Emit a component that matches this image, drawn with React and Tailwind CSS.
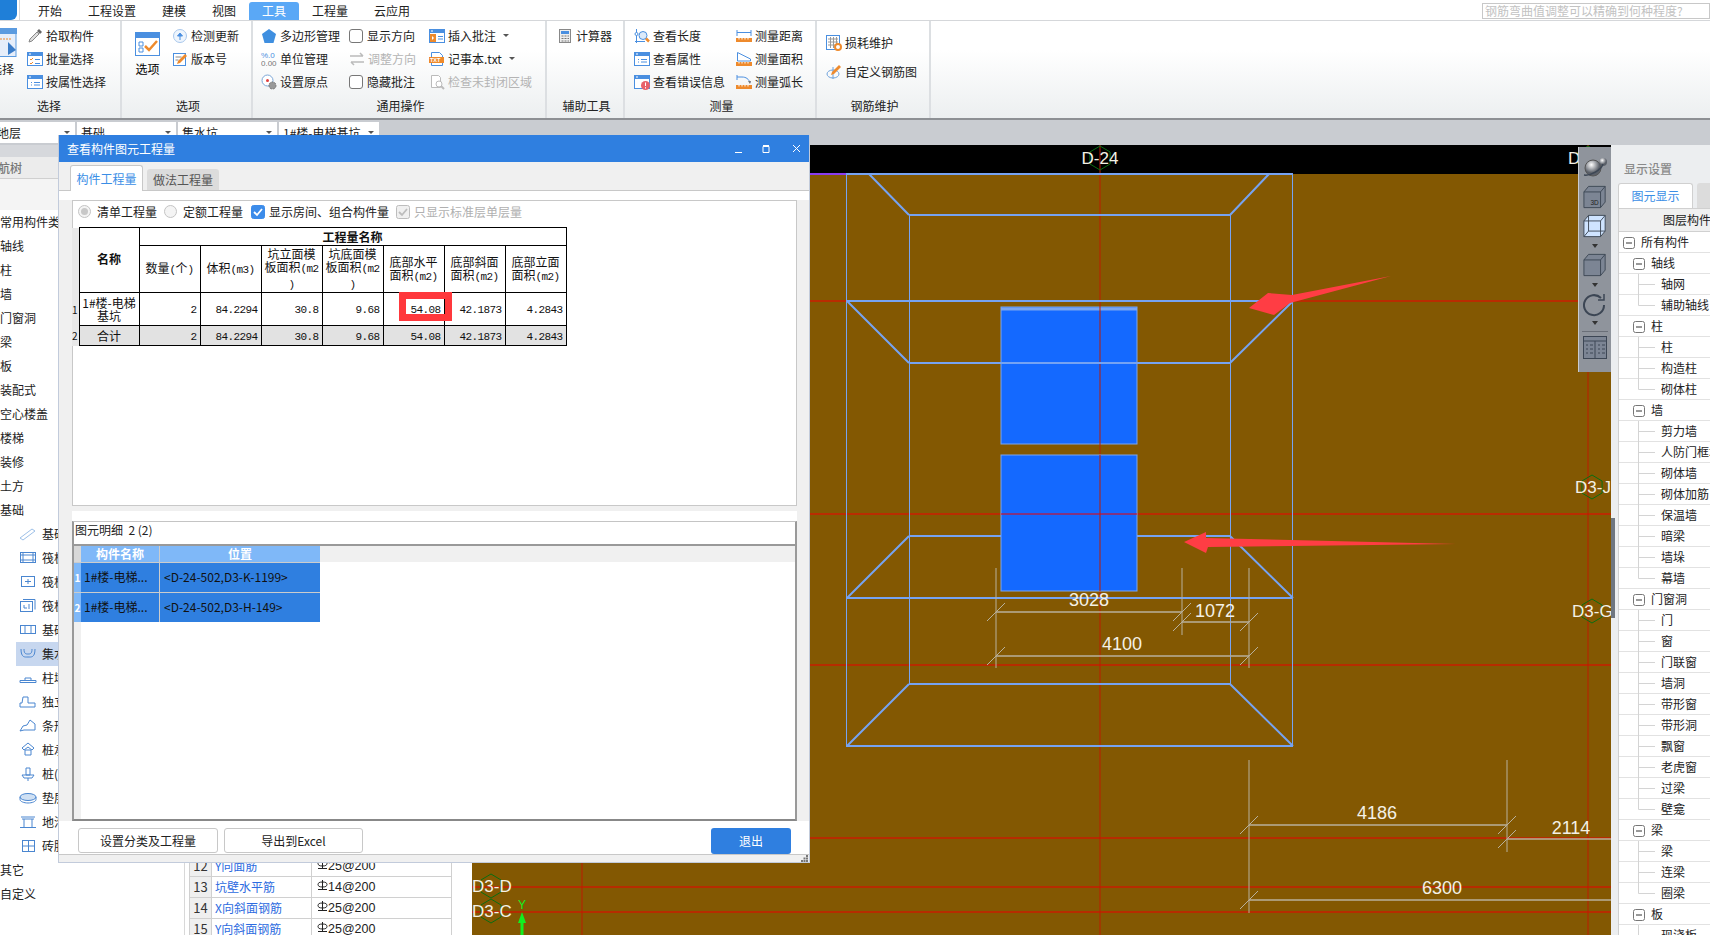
import React from 'react';

const B = '#4a8fe0';
const O = '#ee8a2c';

// small ribbon icons, all drawn in a 16x16 box
const Ico = ({ children, w = 16, h = 16 }) => (
    <svg width={w} height={h} viewBox={`0 0 ${w} ${h}`} className="shrink-0" fill="none">{children}</svg>
);
const Win = () => (<><rect x="0.5" y="1.5" width="15" height="13" fill="#fff" stroke={B} /><rect x="0" y="1" width="16" height="4" fill={B} /><rect x="2" y="2.5" width="2" height="1" fill="#fff" /></>);

const icons = {
    pick: <Ico><path d="M2 14l1-3 7-7 2 2-7 7z" fill="#ddd" stroke="#888" /><path d="M10 3l2-2 3 3-2 2z" fill="#666" /></Ico>,
    batch: <Ico><Win /><path d="M3 8l1 1 2-2M3 12l1 1 2-2" stroke={O} /><path d="M8 8.5h5M8 12.5h5" stroke={B} /></Ico>,
    prop: <Ico><Win /><path d="M7 8.5h6M7 11h6M4 8.5h1M4 11h1" stroke={B} /></Ico>,
    update: <Ico><circle cx="8" cy="8" r="6.5" fill="#eef5fd" stroke="#a9c8ec" /><path d="M8 12V6M5.5 8L8 5l2.500 3z" fill={B} stroke={B} /></Ico>,
    version: <Ico><rect x="1.500" y="2.500" width="12" height="12" fill="#fff" stroke={B} /><path d="M3.500 6h6M3.500 9h3" stroke="#888" /><path d="M5 13l1-3 7-7 2 2-7 7z" fill={O} /></Ico>,
    polygon: <Ico><path d="M8 1l7 5-2.500 9h-9L1 6z" fill="#3f8fe0" /></Ico>,
    unit: <Ico><text x="0" y="7" fontSize="8" fill={B} fontFamily="Liberation Sans">%.0</text><text x="0" y="15" fontSize="8" fill="#777" fontFamily="Liberation Sans">0.00</text></Ico>,
    origin: <Ico><circle cx="6.500" cy="6.500" r="5.500" fill="#fff" stroke="#7aa6d8" /><circle cx="6.500" cy="6.500" r="1.500" fill="#e04040" /><circle cx="11.500" cy="11.500" r="3.500" fill="#999" stroke="#777" strokeDasharray="2 1" /></Ico>,
    adjust: <Ico><path d="M1 5h13M14 5l-3-3M15 11H2M2 11l3 3" stroke="#bbb" strokeWidth="1.500" /></Ico>,
    note: <Ico><Win /><path d="M1 6h6v8H1z" fill={O} /><path d="M3 8l2 2-2 2z" fill="#fff" /><path d="M9 8.500h5M9 11h5" stroke={B} /></Ico>,
    txt: <Ico><path d="M2.500 1.500h8l3 3v10h-11z" fill="#fff" stroke={B} /><rect x="0" y="6" width="15" height="6" fill={O} /><text x="1" y="11" fontSize="5.500" fontWeight="700" fill="#fff" fontFamily="Liberation Sans">TXT</text></Ico>,
    unclosed: <Ico><path d="M2.500 1.500h7l2 2v10h-9z" fill="#fff" stroke="#bbb" /><circle cx="10" cy="10" r="3" fill="#fff" stroke="#bbb" /><path d="M12 12l3 3" stroke="#bbb" strokeWidth="2" /></Ico>,
    calc: <Ico><rect x="2.500" y="1.500" width="11" height="13" fill="#eee" stroke="#888" /><rect x="4" y="3" width="8" height="3" fill={B} /><path d="M4.500 8h2M7.500 8h2M10.500 8h1.500M4.500 10.500h2M7.500 10.500h2M10.500 10.500h1.500M4.500 13h2M7.500 13h2M10.500 13h1.500" stroke="#777" /></Ico>,
    length: <Ico><path d="M2.500 1v14M1 13.500h10" stroke={B} /><circle cx="2.500" cy="6" r="1.500" fill="#fff" stroke={B} /><circle cx="9" cy="7.500" r="4" fill="#dceafa" stroke={B} /><path d="M12 10.500l3 3" stroke={O} strokeWidth="2.500" /></Ico>,
    errorinfo: <Ico><Win /><circle cx="11.500" cy="11.500" r="4.500" fill="#e8606a" /><path d="M11.500 8.500v3.500M11.500 13.200v1.300" stroke="#fff" /></Ico>,
    dist: <Ico><path d="M1 2v6M15 2v6M1 4.500h14" stroke={B} /><rect x="0" y="10" width="16" height="4" fill={O} /><path d="M3 10v1.500M6 10v1.500M9 10v1.500M12 10v1.500" stroke="#fff" /></Ico>,
    area: <Ico><path d="M1.500 1.500l13 6.500v2h-13z" fill="#fff" stroke={B} /><rect x="0" y="11" width="16" height="4" fill={O} /><path d="M3 11v1.500M6 11v1.500M9 11v1.500M12 11v1.500" stroke="#fff" /></Ico>,
    arc: <Ico><path d="M1 1v5M1 3h5c4 0 7 2 8 6" stroke={B} /><path d="M12 7l2 3 1-3" fill="#777" /><rect x="0" y="11" width="16" height="4" fill={O} /><path d="M3 11v1.500M6 11v1.500M9 11v1.500M12 11v1.500" stroke="#fff" /></Ico>,
    loss: <Ico><rect x="0.500" y="0.500" width="13" height="14" fill="#fff" stroke={B} /><path d="M2 4h10M2 7h10M2 10h10M4.500 2v11M7.500 2v11M10.500 2v11" stroke="#999" /><circle cx="12" cy="12" r="3" fill="#fff" stroke={O} strokeWidth="2" /></Ico>,
    custom: <Ico><ellipse cx="7" cy="10" rx="6" ry="4" stroke="#6fa3dc" /><path d="M7 3v12" stroke="#6fa3dc" /><path d="M5 11l1-3 7-7 2 2-7 7z" fill={O} /></Ico>,
};

const Item = ({ icon, label, gray, caret }) => (
    <div className={`flex h-[23px] items-center gap-[3px] whitespace-nowrap ${gray ? 'text-[#b4b4b4]' : 'text-[#1d1d1d]'}`}>
        {icons[icon]}
        <span>{label}</span>
        {caret && <span className="ml-[4px] h-0 w-0 border-x-[3px] border-t-[3px] border-x-transparent border-t-[#555]" />}
    </div>
);

const Check = ({ label }) => (
    <div className="flex h-[23px] items-center gap-[4px] whitespace-nowrap text-[#1d1d1d]">
        <span className="h-[14px] w-[14px] rounded-[3px] border border-[#777] bg-white" />
        <span>{label}</span>
    </div>
);

const Group = ({ label, width, className = '', labelClass = 'pl-[3px]', children }) => (
    <div style={{ width }} className="flex h-full shrink-0 flex-col border-r-2 border-[#dcdfe2]">
        <div className={`flex h-[74px] ${className}`}>{children}</div>
        <div className={`flex h-[25px] items-center justify-center text-[#222] ${labelClass}`}>{label}</div>
    </div>
);

const Ribbon = () => (
    <div className="flex h-[99px] border-b-[2px] border-[#8d9094] bg-gradient-to-b from-white from-30% to-[#eceff0] text-[12px]">
        <Group label="选择" width={122} labelClass="pr-[22px]" className="gap-[8px] pt-[3px]">
            <div className="flex w-[19px] flex-col items-start pt-[4px]">
                <svg width="17" height="29" viewBox="0 0 17 29" fill="none"><rect x="-8" y="0.500" width="24" height="28" fill="#e6eefa" stroke="#5b9be0" /><rect x="-8" y="0" width="25" height="6" fill="#5b9be0" /><path d="M0 11h12" stroke={O} strokeDasharray="2 1" /><path d="M8 14l8 8-8 5z" fill="#3a7cc8" /></svg>
                <span className="mt-[3px] -ml-[10px] text-[#222]">选择</span>
            </div>
            <div><Item icon="pick" label="拾取构件" /><Item icon="batch" label="批量选择" /><Item icon="prop" label="按属性选择" /></div>
        </Group>
        <Group label="选项" width={131} className="gap-[12px] pl-[13px] pt-[3px]">
            <div className="flex w-[25px] flex-col items-center pt-[8px]">
                <svg width="25" height="24" viewBox="0 0 25 24" fill="none"><rect x="0.500" y="0.500" width="24" height="23" fill="#fff" stroke={B} /><rect x="0" y="0" width="25" height="6" fill={B} /><path d="M4 10h4v4H4zM4 16h4v4H4z" stroke={B} /><path d="M10 14l4 4 8-9" stroke={O} strokeWidth="2.500" /></svg>
                <span className="mt-[4px] whitespace-nowrap">选项</span>
            </div>
            <div><Item icon="update" label="检测更新" /><Item icon="version" label="版本号" /></div>
        </Group>
        <Group label="通用操作" width={294} className="pl-[8px] pt-[3px]">
            <div className="w-[88px]"><Item icon="polygon" label="多边形管理" /><Item icon="unit" label="单位管理" /><Item icon="origin" label="设置原点" /></div>
            <div className="w-[80px]"><Check label="显示方向" /><Item icon="adjust" label="调整方向" gray /><Check label="隐藏批注" /></div>
            <div><Item icon="note" label="插入批注" caret /><Item icon="txt" label="记事本.txt" caret /><Item icon="unclosed" label="检查未封闭区域" gray /></div>
        </Group>
        <Group label="辅助工具" width={78} className="pl-[10px] pt-[3px]">
            <Item icon="calc" label="计算器" />
        </Group>
        <Group label="测量" width={192} className="pl-[9px] pt-[3px]">
            <div className="w-[102px]"><Item icon="length" label="查看长度" /><Item icon="prop" label="查看属性" /><Item icon="errorinfo" label="查看错误信息" /></div>
            <div><Item icon="dist" label="测量距离" /><Item icon="area" label="测量面积" /><Item icon="arc" label="测量弧长" /></div>
        </Group>
        <Group label="钢筋维护" width={114} className="flex-col gap-[6px] pl-[9px] pt-[10px]">
            <Item icon="loss" label="损耗维护" /><Item icon="custom" label="自定义钢筋图" />
        </Group>
    </div>
);

const tabs = [
    ['开始', 'w-[58px]'], ['工程设置', 'w-[66px]'], ['建模', 'w-[58px]'], ['视图', 'w-[42px]'],
    ['工具', 'w-[50px] ml-[4px] rounded-t-[3px] bg-[#5aa8f6] text-white'], ['工程量', 'w-[62px]'], ['云应用', 'w-[62px]'],
];

const TopTabs = () => (
    <div className="flex h-[21px] border-b border-[#d5d7da] bg-white text-[12px] text-[#222]">
        <div className="h-[20px] w-[17px] rounded-br-[6px] bg-[#1f7fd8]" />
        <div className="ml-[2px] mr-[1px] w-px bg-[#d5d7da]" />
        {tabs.map(([t, c]) => (
            <div key={t} className={`mt-[2px] flex h-[18px] items-center justify-center ${c}`}>{t}</div>
        ))}
        <div className="ml-auto mt-[3px] flex h-[16px] w-[228px] items-center border border-[#c8c8c8] pl-[2px] text-[#c2c2c2]">钢筋弯曲值调整可以精确到何种程度?</div>
    </div>
);

const Drop = ({ w, text, cls = '' }) => (
    <div style={{ width: w }} className="flex h-[21px] items-center justify-between overflow-hidden bg-white pl-[4px] pr-[5px]">
        <span className={cls}>{text}</span>
        <span className="h-0 w-0 border-x-[3px] border-t-[3px] border-x-transparent border-t-[#555]" />
    </div>
);

const DropRow = () => (
    <div className="flex h-[25px] gap-[2px] bg-[#c9ccd1] pt-[2px] text-[12px] text-[#222]">
        <Drop w={75} text="地层" cls="-ml-[7px]" />
        <Drop w={99} text="基础" />
        <Drop w={99} text="集水坑" />
        <Drop w={100} text="1#楼-电梯基坑" />
    </div>
);

const S = '#4a86d0';
const childIcons = [
    <path key="0" d="M1 12L13 3l3 2L4 14z" stroke="#9dc0e8" />,
    <g key="1" stroke={S}><rect x="1.500" y="2.500" width="15" height="10" /><path d="M4 2.500v10M14 2.500v10M1.500 5h15M1.500 10h15" /></g>,
    <g key="2" stroke={S}><rect x="2.500" y="2.500" width="13" height="10" /><path d="M6 7.500h6M9 5v5" /></g>,
    <g key="3" stroke={S}><rect x="1.500" y="3.500" width="12" height="10" /><path d="M4 1.500h12v10M5 7v3h3M10 6v5" /></g>,
    <g key="4" stroke={S}><rect x="1.500" y="3.500" width="15" height="8" /><path d="M6 3.500v8M12 3.500v8" /></g>,
    <g key="5" stroke={S}><path d="M2 3c0 9 4 8 7 8s7 1 7-8M5 3c0 5 2 5 4 5s4 0 4-5" /></g>,
    <g key="6" stroke={S}><path d="M1 12.500h16v-2H1zM6 10.500V8h6v2.500" /></g>,
    <g key="7" stroke={S}><path d="M1 13h15V9H9V3H4L3 9H1z" /></g>,
    <g key="8" stroke={S}><path d="M1 13l3-5 4-1 3-5 5 4v6H5z" /></g>,
    <g key="9" stroke={S}><path d="M9 1L3 6l2 2 4-3 4 3 2-2zM6 8h6v5H6z" /></g>,
    <g key="10" stroke={S}><path d="M7 2h4v7H7zM3 9h12l-2 3H5zM9 12v3" /></g>,
    <g key="11" stroke={S}><ellipse cx="9" cy="7" rx="8" ry="3.500" fill="#cfe0f3" /><path d="M1 7v2.500C1 11.500 5 13 9 13s8-1.500 8-3.500V7" /></g>,
    <g key="12" stroke={S}><path d="M2 3h14M3 5h12M5 5v8M13 5v8M1 13.500h16" /></g>,
    <g key="13" stroke={S}><rect x="3.500" y="2.500" width="12" height="11" /><path d="M9.500 2.500v11M3.500 8h12" /></g>,
];
const childNames = ['基础梁', '筏板基础', '筏板主筋', '筏板负筋', '基础板带', '集水坑', '柱墩', '独立基础', '条形基础', '桩承台', '桩(孔)', '垫层', '地沟', '砖胎膜'];

const TreeRow = ({ children }) => <div className="flex h-[24px] items-center whitespace-nowrap">{children}</div>;

const LeftTree = () => (
    <div className="w-[185px] shrink-0 border-r border-[#d8d8d8] bg-white text-[12px] text-[#222]">
        <div className="h-[12px] bg-[#d6d8dc]" />
        <div className="flex h-[22px] items-center overflow-hidden border-b border-[#d0d0d0] bg-[#ececec] font-medium text-[#777]"><span className="-ml-[14px]">导航树</span></div>
        <div className="h-[31px] bg-[#f4f4f4]" />
        {['常用构件类型', '轴线', '柱', '墙', '门窗洞', '梁', '板', '装配式', '空心楼盖', '楼梯', '装修', '土方', '基础'].map((t) => (
            <TreeRow key={t}>{t}</TreeRow>
        ))}
        {childNames.map((t, i) => (
            <div key={t} className={`ml-[16px] flex h-[24px] items-center gap-[5px] whitespace-nowrap pl-[3px] ${t === '集水坑' ? 'bg-[#c7d7ef]' : ''}`}>
                <svg width="18" height="16" viewBox="0 0 18 16" fill="none" className="shrink-0">{childIcons[i]}</svg>
                {t}
            </div>
        ))}
        <TreeRow>其它</TreeRow>
        <TreeRow>自定义</TreeRow>
    </div>
);

const rebar = [
    ['12', 'Y向面筋', '25@200'],
    ['13', '坑壁水平筋', '14@200'],
    ['14', 'X向斜面钢筋', '25@200'],
    ['15', 'Y向斜面钢筋', '25@200'],
];

// HRB400 bar grade mark in front of the spacing text
const Grade = () => (
    <svg width="11" height="11" viewBox="0 0 11 11" fill="none" stroke="#222" className="mb-[3px] shrink-0">
        <ellipse cx="5.500" cy="4.500" rx="4.500" ry="2.500" /><path d="M5.500 0v9.500M1 9.500h9" />
    </svg>
);

const MidPanel = () => (
    <div className="w-[287px] shrink-0 bg-white pl-[4px] pt-[711px] text-[12px]">
        <div className="w-[263px]">
            {rebar.map(([n, a, b]) => (
                <div key={n} className="flex h-[21px] border-b border-[#d0d0d0]">
                    <div className="flex w-[23px] items-center justify-center border-x border-[#d0d0d0] bg-[#efefef] text-[13px] text-[#333]">{n}</div>
                    <div className="flex w-[100px] items-center border-r border-[#d0d0d0] pl-[3px] text-[#2d6be0]">{a}</div>
                    <div className="flex flex-1 items-center border-r border-[#d0d0d0] pl-[5px] font-['Liberation_Sans',sans-serif] text-[12.500px] text-[#222]"><Grade />{b}</div>
                </div>
            ))}
        </div>
    </div>
);

const Hex = ({ x, y, r = 12 }) => {
    const dx = r * 0.84;
    const pts = [[x, y - r], [x + dx, y - r / 2], [x + dx, y + r / 2], [x, y + r], [x - dx, y + r / 2], [x - dx, y - r / 2]];
    return <polygon points={pts.map((p) => p.join(',')).join(' ')} fill="none" stroke="#0a6e12" />;
};

const dimText = { fill: '#f4f1e6', fontSize: 18, fontFamily: 'Liberation Sans', textAnchor: 'middle' };

const Dim = ({ x1, x2, y, label, tx, ty, endTick = true }) => (
    <g stroke="#b8b09c">
        <path d={`M${x1} ${y}H${x2}`} strokeWidth="1.500" />
        <path d={`M${x1 - 9} ${y + 9}L${x1 + 9} ${y - 9}`} />
        {endTick && <path d={`M${x2 - 9} ${y + 9}L${x2 + 9} ${y - 9}`} />}
        <text x={tx} y={ty + 6} stroke="none" {...dimText}>{label}</text>
    </g>
);

const Axis = ({ x, y, label, tx }) => (
    <g>
        <Hex x={x} y={y} />
        <text x={tx ?? x} y={y + 6} {...dimText} textAnchor={tx ? 'start' : 'middle'} fontSize="17">{label}</text>
    </g>
);

// model view, viewBox uses page coordinates so numbers read off the screenshot directly
const Canvas = () => (
    <svg width="1139" height="790" viewBox="472 145 1139 790" className="block shrink-0">
        <rect x="472" y="145" width="1139" height="790" fill="#835802" />
        <rect x="472" y="145" width="1139" height="29" fill="#000" />
        <path d="M810 174H846" stroke="#8a3cf0" strokeWidth="2" />
        <g stroke="#c81e00" strokeWidth="1.500">
            <path d="M472 665H1611M472 838H1611M472 887H1611M472 912H1611" />
        </g>
        <rect x="1001" y="307" width="136" height="137" fill="#1469ff" stroke="#7ba6f0" />
        <path d="M1001 309H1137" stroke="#7ba6f0" strokeWidth="3" />
        <path d="M472 301H1611M472 514H1611" stroke="#f00000" />
        <path d="M1100 145V935M582 863V935M1588 145V935" stroke="#bb1c00" />
        <g stroke="#76a3f2" fill="none">
            <path d="M846.500 174V746M1292.500 174V746M909.500 215V684M1230.500 215V684" />
            <g strokeWidth="2">
                <path d="M846 174H1293M909 215H1230M846 301H1293M909 363H1230M846 598H1293M909 684H1230M846 746H1293" />
                <path d="M909 536H1001M1137 536H1230" />
                <path d="M869 174L909 215M1269 174L1230 215M847 301L909 363M1293 301L1230 363M909 536L847 598M1230 536L1293 598M909 684L847 746M1230 684L1293 746" />
            </g>
        </g>
        <rect x="1001" y="455" width="136" height="136" fill="#1469ff" stroke="#7ba6f0" />
        <path d="M1100 455V591" stroke="#bb1c00" />
        <path d="M1001 514H1137" stroke="#f00000" />
        <path d="M996 568V668M1182 568V635M1249 568V668M1249 760V913M1507 760V852" stroke="#b8b09c" />
        <Dim x1={996} x2={1182} y={612} label="3028" tx={1089} ty={600} />
        <Dim x1={1182} x2={1249} y={622} label="1072" tx={1215} ty={611} />
        <Dim x1={996} x2={1249} y={656} label="4100" tx={1122} ty={644} />
        <Dim x1={1249} x2={1507} y={825} label="4186" tx={1377} ty={813} />
        <Dim x1={1507} x2={1640} y={839} label="2114" tx={1571} ty={828} endTick={false} />
        <Dim x1={1249} x2={1640} y={900} label="6300" tx={1442} ty={888} endTick={false} />
        <Axis x={1100} y={158} label="D-24" />
        <Axis x={1588} y={158} label="D-25" tx={1568} />
        <Axis x={1592} y={487} label="D3-J" tx={1575} />
        <Axis x={1592} y={611} label="D3-G" tx={1572} />
        <Axis x={491} y={886} label="D3-D" tx={472} />
        <Axis x={491} y={911} label="D3-C" tx={472} />
        <path d="M522 923V935" stroke="#10f020" strokeWidth="3" />
        <path d="M522 912L518 923H526z" fill="#10f020" />
        <text x="522" y="909" fill="#10f020" fontSize="12" textAnchor="middle" fontFamily="Liberation Sans">Y</text>
        <path d="M1391 276L1292 295L1268 293L1249 308L1274 315L1290 303z" fill="#ff3d44" />
        <path d="M1456 544L1206 538L1206 532L1184 542L1206 553L1208 547z" fill="#ff3d44" />
    </svg>
);

const Caret = ({ mt }) => <span className={`h-0 w-0 border-x-[3px] border-t-[4px] border-x-transparent border-t-[#333] ${mt}`} />;

const ViewTools = () => (
    <div className="absolute left-[1578px] top-[147px] flex h-[225px] w-[33px] flex-col items-center border-l border-[#c9ccd1] bg-[#8f949c] pt-[10px]">
        <svg width="25" height="20" viewBox="0 0 25 20" fill="none">
            <defs><radialGradient id="ball" cx="0.400" cy="0.300"><stop offset="0" stopColor="#fff" /><stop offset="1" stopColor="#5a5f68" /></radialGradient></defs>
            <ellipse cx="10" cy="11" rx="8" ry="8" fill="url(#ball)" stroke="#555" />
            <circle cx="20" cy="5" r="4" fill="url(#ball)" />
            <path d="M1 18C8 19 18 13 20 7" stroke="#3c4654" strokeWidth="1.500" />
        </svg>
        <svg width="24" height="24" viewBox="0 0 26 25" fill="#7c8594" stroke="#3c4654" className="mt-[8px]">
            <path d="M1 7L6 1h18v17l-5 6H1z" /><path d="M1 7h18v17M19 7l5-6" fill="none" />
            <text x="8" y="21" fontSize="7" fill="#222" stroke="none" fontFamily="Liberation Sans">3D</text>
        </svg>
        <svg width="24" height="24" viewBox="0 0 26 25" fill="#cfe4ff" stroke="#3c4654" className="mt-[5px]">
            <path d="M1 7L6 1h18v17l-5 6H1z" /><path d="M1 7h18v17M19 7l5-6M6 1v17h18M6 18l-5 6" fill="none" />
        </svg>
        <Caret mt="mt-[6px]" />
        <svg width="24" height="24" viewBox="0 0 26 25" fill="#7c8594" stroke="#3c4654" className="mt-[5px]">
            <path d="M1 7L6 1h18v17l-5 6H1z" /><path d="M1 7h18v17M19 7l5-6" fill="none" />
        </svg>
        <Caret mt="mt-[6px]" />
        <svg width="24" height="24" viewBox="0 0 24 24" fill="none" stroke="#3c4654" strokeWidth="2" className="mt-[6px]">
            <path d="M21 12a10 10 0 1 1-3-7" /><path d="M21 1v6h-6" strokeWidth="1.500" />
        </svg>
        <Caret mt="mt-[4px]" />
        <div className="mt-[6px] h-px w-[26px] bg-[#6a6f78]" />
        <svg width="24" height="23" viewBox="0 0 24 23" fill="#7c8594" stroke="#3c4654" className="mt-[4px]">
            <rect x="0.500" y="0.500" width="23" height="22" /><path d="M0 5h24" />
            <path d="M12 5v18M3 9h2M3 13h2M3 17h2M7 9h3M7 13h3M7 17h3M15 9h2M15 13h2M15 17h2M19 9h3M19 13h3M19 17h3" />
        </svg>
    </div>
);

// [label, level, last child]
const layers = [
    ['所有构件', 0], ['轴线', 1], ['轴网', 2], ['辅助轴线', 2, 1], ['柱', 1], ['柱', 2], ['构造柱', 2], ['砌体柱', 2, 1],
    ['墙', 1], ['剪力墙', 2], ['人防门框墙', 2], ['砌体墙', 2], ['砌体加筋', 2], ['保温墙', 2], ['暗梁', 2], ['墙垛', 2], ['幕墙', 2, 1],
    ['门窗洞', 1], ['门', 2], ['窗', 2], ['门联窗', 2], ['墙洞', 2], ['带形窗', 2], ['带形洞', 2], ['飘窗', 2], ['老虎窗', 2], ['过梁', 2], ['壁龛', 2, 1],
    ['梁', 1], ['梁', 2], ['连梁', 2], ['圈梁', 2, 1], ['板', 1], ['现浇板', 2],
];

const LayerRow = ({ label, level, last }) => {
    const box = level === 0 ? 4 : 14;
    return (
        <div className="flex h-[21px] shrink-0 items-center whitespace-nowrap border-b border-[#e2e2e2]">
            <svg width={level === 0 ? 22 : level === 1 ? 32 : 42} height="21" viewBox="0 0 42 21" preserveAspectRatio="xMinYMin slice" fill="none" className="shrink-0">
                {level === 2 && <path d={`M19.500 0V${last ? 10.500 : 21}M19.500 10.500H36`} stroke="#d4d4d4" />}
                {level < 2 && (
                    <g>
                        <rect x={box + 0.500} y="5.500" width="11" height="11" rx="2" fill="#fff" stroke="#777" />
                        <path d={`M${box + 3} 11H${box + 9}`} stroke="#333" />
                    </g>
                )}
            </svg>
            {label}
        </div>
    );
};

const RightPanel = () => (
    <div className="flex w-[99px] shrink-0 bg-[#eceef0] text-[12px] text-[#222]">
        <div className="w-[4px] shrink-0">
            <div className="mt-[373px] h-[100px] bg-[#6f7680]" />
        </div>
        <div className="min-w-0 flex-1 overflow-hidden">
            <div className="flex h-[33px] items-center pl-[9px] pt-[14px] font-medium text-[#8a8a8a]">显示设置</div>
            <div className="flex h-[30px] items-end gap-[4px] pl-[3px]">
                <div className="flex h-[25px] w-[75px] shrink-0 items-center justify-center rounded-t-[3px] border border-b-0 border-[#d0d0d0] bg-white text-[#3a8ee6]">图元显示</div>
                <div className="h-[25px] w-[30px] shrink-0 rounded-t-[3px] bg-[#dcdcdc]" />
            </div>
            <div className="ml-[3px] flex h-[727px] flex-col border-l border-t border-[#d0d0d0] bg-white">
                <div className="flex h-[23px] shrink-0 items-center border-b border-[#d0d0d0] bg-[#f0f0f0] pl-[44px] whitespace-nowrap">图层构件</div>
                {layers.map(([t, l, last], i) => <LayerRow key={i} label={t} level={l} last={last} />)}
            </div>
        </div>
    </div>
);

// half-width digits of the quantity table
const M = ({ children }) => <span className="font-['Liberation_Mono',monospace] text-[11px] tracking-[-0.6px]">{children}</span>;

const head = [
    <>数量<M>(</M>个<M>)</M></>,
    <>体积<M>(m3)</M></>,
    <>坑立面模<br />板面积<M>(m2</M><br /><M>)</M></>,
    <>坑底面模<br />板面积<M>(m2</M><br /><M>)</M></>,
    <>底部水平<br />面积<M>(m2)</M></>,
    <>底部斜面<br />面积<M>(m2)</M></>,
    <>底部立面<br />面积<M>(m2)</M></>,
];
const values = ['2', '84.2294', '30.8', '9.68', '54.08', '42.1873', '4.2843'];
const cell = 'border border-black p-0';

const QtyTable = () => (
    <div className="relative -ml-px w-[494px]">
        <table className="w-[494px] table-fixed border-collapse text-[12px] leading-[13px] text-[#111]">
            <colgroup>
                <col className="w-[7px]" />
                <col className="w-[60px]" />
                {[0, 1, 2, 3, 4, 5].map((i) => <col key={i} className="w-[61px]" />)}
                <col className="w-[61px]" />
            </colgroup>
            <tbody>
                <tr className="h-[18px]">
                    <td className="bg-[#e8e8e8]" />
                    <td rowSpan={2} className={`${cell} pb-[4px] text-center font-bold`}>名称</td>
                    <td colSpan={7} className={`${cell} pb-[1px] text-center font-bold`}>工程量名称</td>
                </tr>
                <tr className="h-[47px]">
                    <td className="bg-[#e8e8e8]" />
                    {head.map((h, i) => <td key={i} className={`${cell} overflow-hidden whitespace-nowrap text-center`}>{h}</td>)}
                </tr>
                <tr className="h-[33px]">
                    <td className="overflow-hidden bg-[#e8e8e8] text-[10px]">1</td>
                    <td className={`${cell} text-center`}>1#楼-电梯<br />基坑</td>
                    {values.map((v, i) => <td key={i} className={`${cell} pr-[3px] text-right`}><M>{v}</M></td>)}
                </tr>
                <tr className="h-[20px] bg-[#e2e2e2]">
                    <td className="overflow-hidden bg-[#e8e8e8] text-[10px]">2</td>
                    <td className={`${cell} text-center`}>合计</td>
                    {values.map((v, i) => <td key={i} className={`${cell} pr-[3px] text-right`}><M>{v}</M></td>)}
                </tr>
            </tbody>
        </table>
        <div className="absolute left-[327px] top-[65px] h-[29px] w-[53px] border-[7px] border-[#ff383c]" />
    </div>
);

const Radio = ({ label, dot }) => (
    <div className="flex items-center gap-[6px] whitespace-nowrap">
        <span className="flex h-[13px] w-[13px] items-center justify-center rounded-full border border-[#c4c4c4] bg-[#f4f4f4]">
            {dot && <span className="h-[7px] w-[7px] rounded-full bg-[#c8c8c8]" />}
        </span>
        {label}
    </div>
);

const Tick = ({ color }) => (
    <svg width="14" height="14" viewBox="0 0 14 14" fill="none" className="shrink-0">
        <rect x="0.500" y="0.500" width="13" height="13" rx="2" fill={color === 'blue' ? '#3c8cea' : '#f0f0f0'} stroke={color === 'blue' ? '#3c8cea' : '#bdbdbd'} />
        <path d="M3 7l3 3 5-6" stroke={color === 'blue' ? '#fff' : '#bdbdbd'} strokeWidth="1.800" />
    </svg>
);

const Btn = ({ w, children }) => (
    <div style={{ width: w }} className="flex h-[25px] items-center justify-center rounded-[3px] border border-[#c8c8c8] bg-white text-[#222]">{children}</div>
);

const Dialog = () => (
    <div className="absolute left-[58px] top-[135px] flex h-[728px] w-[752px] flex-col border border-t-0 border-[#c2cbdb] bg-[#f0f0f0] text-[12px] text-[#222]">
        <div className="flex h-[27px] shrink-0 items-center bg-[#2f7fe0] pl-[8px] pr-[4px] text-white">
            <span>查看构件图元工程量</span>
            <svg width="72" height="12" viewBox="0 0 72 12" fill="none" stroke="#fff" className="ml-auto">
                <path d="M2 9.500H9M30 3.500h6v6h-6zM30 2.500h6M60 2l7 7M67 2l-7 7" />
            </svg>
        </div>
        <div className="flex h-[29px] shrink-0 items-end border-b border-[#c8c8c8] pl-[11px]">
            <div className="-mb-px flex h-[26px] w-[73px] items-center justify-center rounded-t-[3px] border border-b-0 border-[#c8c8c8] bg-white text-[#3a8ee6]">构件工程量</div>
            <div className="ml-[4px] flex h-[21px] w-[72px] items-center justify-center rounded-t-[3px] bg-[#dcdcdc] text-[#555]">做法工程量</div>
        </div>
        <div className="h-[9px] shrink-0 bg-white" />
        <div className="ml-[13px] mr-[12px] h-[306px] shrink-0 border border-[#c8c8c8] bg-white">
            <div className="flex h-[26px] items-center pb-[5px] pl-[5px]">
                <div className="w-[86px]"><Radio label="清单工程量" dot /></div>
                <div className="w-[87px]"><Radio label="定额工程量" /></div>
                <div className="flex w-[145px] items-center gap-[4px] whitespace-nowrap"><Tick color="blue" />显示房间、组合构件量</div>
                <div className="flex items-center gap-[4px] whitespace-nowrap text-[#b0b0b0]"><Tick />只显示标准层单层量</div>
            </div>
            <QtyTable />
        </div>
        <div className="h-[5px] shrink-0" />
        <div className="ml-[13px] mr-[12px] h-[10px] shrink-0 bg-white" />
        <div className="ml-[13px] mr-[12px] flex h-[300px] shrink-0 flex-col border-t border-l-2 border-b-2 border-r-2 border-t-[#c4c4c4] border-l-[#999] border-b-[#888] border-r-[#999] bg-white">
            <div className="flex h-[22px] shrink-0 items-center whitespace-pre pb-[6px] pl-px">图元明细  2 (2)</div>
            <div className="flex h-[18px] shrink-0 border-t-2 border-[#999] bg-[#f0f0f0]">
                <div className="w-[7px] bg-[#d8d8d8]" />
                <div className="flex w-[79px] items-center justify-center border-r border-[#ccc] bg-[#7fb8f8] font-bold text-white">构件名称</div>
                <div className="flex w-[160px] items-center justify-center bg-[#7fb8f8] font-bold text-white">位置</div>
            </div>
            {[['1', '<D-24-502,D3-K-1199>'], ['2', '<D-24-502,D3-H-149>']].map(([n, p]) => (
                <div key={n} className="flex h-[30px] w-[246px] shrink-0 border-t border-[#ccc]">
                    <div className="flex w-[7px] items-center justify-center bg-[#7fb8f8] text-[10px] font-bold text-white">{n}</div>
                    <div className="flex w-[79px] items-center overflow-hidden whitespace-nowrap border-r border-[#ccc] bg-[#2f7fe0] pb-[2px] pl-[3px] text-[#111]">1#楼-电梯...</div>
                    <div className="flex w-[160px] items-center bg-[#2f7fe0] pb-[2px] pl-[4px] text-[#111]">{p}</div>
                </div>
            ))}
            <div className="flex min-h-0 flex-1"><div className="w-[7px] bg-[#f0f0f0]" /></div>
        </div>
        <div className="flex h-[34px] shrink-0 items-start border-b border-[#c8c8c8] bg-white pl-[19px] pr-[18px] pt-[7px]">
            <Btn w={140}>设置分类及工程量</Btn>
            <div className="w-[6px]" />
            <Btn w={139}>导出到Excel</Btn>
            <div className="ml-auto flex h-[26px] w-[80px] items-center justify-center rounded-[3px] bg-[#2f7fe0] text-white">退出</div>
        </div>
        <div className="flex flex-1 items-end justify-end pb-px pr-px">
            <svg width="7" height="7" viewBox="0 0 7 7" fill="#777"><path d="M5 0h2v2H5zM2.500 2.500h2v2h-2zM5 2.500h2v2H5zM0 5h2v2H0zM2.500 5h2v2h-2zM5 5h2v2H5z" /></svg>
        </div>
    </div>
);

const App = () => (
    <div className="relative h-[935px] w-[1710px] overflow-hidden bg-white font-['Noto_Sans_CJK_SC',sans-serif]">
        <TopTabs />
        <Ribbon />
        <DropRow />
        <div className="flex h-[790px] overflow-hidden">
            <LeftTree />
            <MidPanel />
            <Canvas />
            <RightPanel />
        </div>
        <ViewTools />
        <Dialog />
    </div>
);

export default App;
